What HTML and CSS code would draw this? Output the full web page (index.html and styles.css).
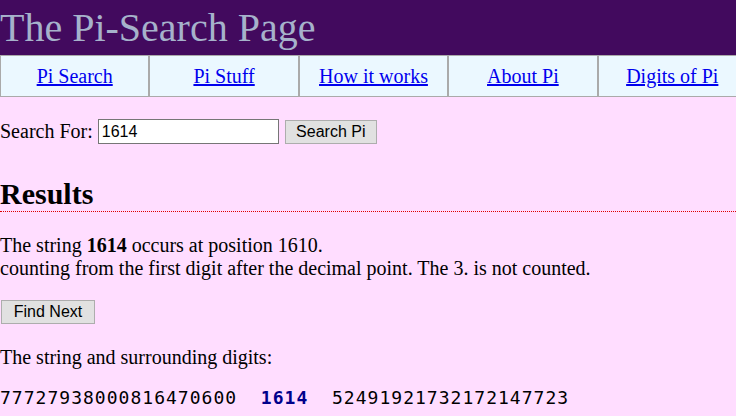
FILE: index.html
```html
<!DOCTYPE html>
<html lang="en">
<head>
    <meta charset="utf-8">
    <title>The Pi-Search Page</title>
    <link rel="stylesheet" href="styles.css">
</head>
<body>
    <div class="header">
        <h1>The Pi-Search Page</h1>
    </div>
    <div class="nav">
        <div class="nav__item"><a href="#">Pi Search</a></div>
        <div class="nav__item"><a href="#">Pi Stuff</a></div>
        <div class="nav__item"><a href="#">How it works</a></div>
        <div class="nav__item"><a href="#">About Pi</a></div>
        <div class="nav__item"><a href="#">Digits of Pi</a></div>
    </div>
    <form class="search">
        <label for="searchInput">Search For:</label>
        <input type="text" id="searchInput" class="search__input" value="1614">
        <button type="button" class="btn btn--search">Search Pi</button>
    </form>

    <h2 class="results-title">Results</h2>
    <p class="results-text">
        The string <b>1614</b> occurs at position 1610.<br>
        counting from the first digit after the decimal point. The 3. is not counted.
    </p>
    <button type="button" class="btn btn--next">Find Next</button>
    <p class="digits-label">The string and surrounding digits:</p>
    <div class="digits">77727938000816470600&nbsp;&nbsp;<span class="digits__match">1614</span>&nbsp;&nbsp;52491921732172147723</div>
</body>
</html>
```

FILE: styles.css
```css
/* Основные стили */
body {
    font-family: 'Liberation Serif', 'Times New Roman', serif;
    font-size: 20px;
    line-height: 23px;
    background-color: #ffddff;
    color: #000000;
    margin: 0;
    padding: 0;
    overflow-x: hidden;
}

/* Шапка */
.header {
    background-color: #420a5e;
    height: 55px;
}

.header h1 {
    margin: 0;
    font-size: 40px;
    line-height: 55px;
    font-weight: normal;
    color: #a6b2cb;
}

/* Меню */
.nav {
    display: flex;
    width: 747px;
}

.nav__item {
    flex: 0 0 149.4px;
    box-sizing: border-box;
    height: 42px;
    display: flex;
    align-items: center;
    justify-content: center;
    background-color: #ebf8ff;
    border: 1px solid #aaaaaa;
}

.nav__item a {
    color: #0000ee;
}

/* Поиск */
.search {
    display: flex;
    align-items: center;
    height: 25px;
    margin: 22px 0 0;
}

.search__input {
    box-sizing: border-box;
    width: 181px;
    height: 25px;
    margin: 0 0 0 5px;
    padding: 0 3px;
    border: 1px solid #767676;
    font-family: 'Liberation Sans', Arial, sans-serif;
    font-size: 16px;
    background-color: #ffffff;
}

.btn {
    box-sizing: border-box;
    height: 24px;
    padding: 0;
    background-color: #e1e1e1;
    border: 1px solid #adadad;
    font-family: 'Liberation Sans', Arial, sans-serif;
    font-size: 16px;
    color: #000000;
}

.btn--search {
    width: 92px;
    margin-left: 6px;
}

.btn--next {
    display: block;
    width: 94px;
    margin: 20px 0 0 1px;
}

/* Результаты */
.results-title {
    margin: 33px 0 0;
    font-size: 30px;
    line-height: 34px;
    border-bottom: 1px dotted #dd0000;
}

.results-text {
    margin: 22px 0 0;
}

.digits-label {
    margin: 22px 0 0;
}

.digits {
    margin-top: 17px;
    font-family: 'DejaVu Sans Mono', monospace;
    font-size: 18px;
    letter-spacing: 1.02px;
    white-space: nowrap;
}

.digits__match {
    color: #00008b;
    font-weight: bold;
}
```
